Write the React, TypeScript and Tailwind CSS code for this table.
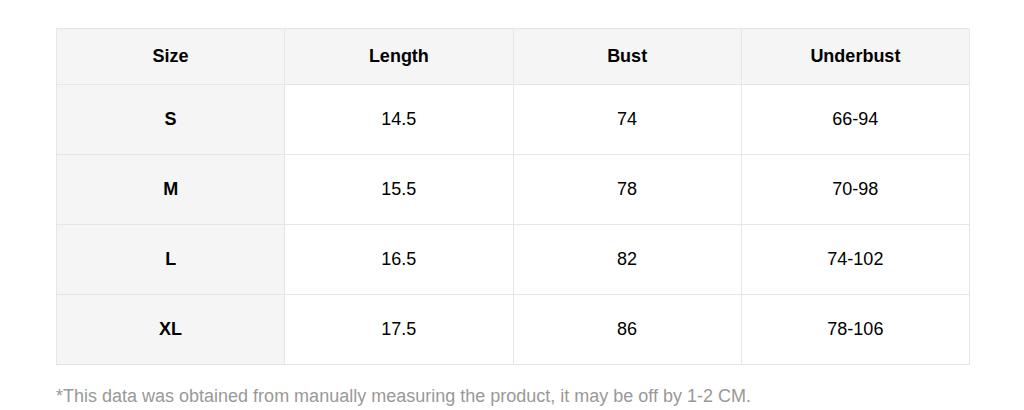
import React from "react";

const rows = [
  ["S", "14.5", "74", "66-94"],
  ["M", "15.5", "78", "70-98"],
  ["L", "16.5", "82", "74-102"],
  ["XL", "17.5", "86", "78-106"],
];

export default function App() {
  return (
    <div className="w-[1024px] h-[410px] bg-white pt-[28px] pl-[56px] font-['Liberation_Sans',Arial,sans-serif] text-[18px] text-black">
      <table className="w-[914px] border-collapse table-fixed">
        <thead>
          <tr className="h-[56px] bg-[#f5f5f5]">
            {["Size", "Length", "Bust", "Underbust"].map((h) => (
              <th key={h} className="border border-[#e6e6e6] font-bold text-center align-middle p-0">
                {h}
              </th>
            ))}
          </tr>
        </thead>
        <tbody>
          {rows.map((r) => (
            <tr key={r[0]} className="h-[70px]">
              {r.map((c, i) => (
                <td
                  key={i}
                  className={`border border-[#e6e6e6] text-center align-middle p-0 ${
                    i === 0 ? "bg-[#f5f5f5] font-bold" : "bg-white"
                  }`}
                >
                  {c}
                </td>
              ))}
            </tr>
          ))}
        </tbody>
      </table>
      <p className="mt-[20px] text-[18px] text-[#999999] leading-[22px]">
        *This data was obtained from manually measuring the product, it may be off by 1-2 CM.
      </p>
    </div>
  );
}
